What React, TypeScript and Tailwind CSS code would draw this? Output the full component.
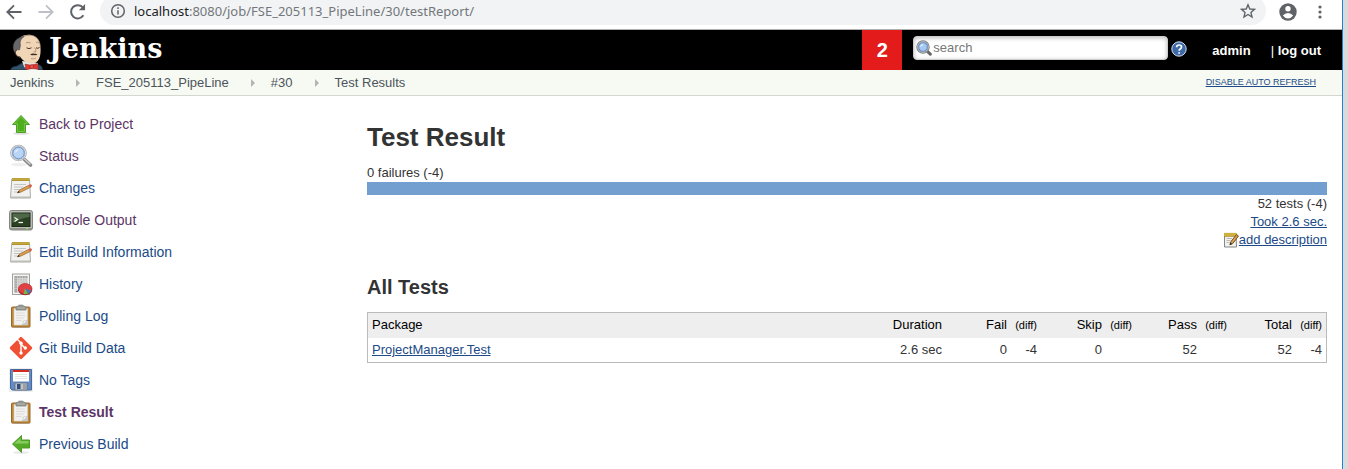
import React from "react";

type IconProps = { className?: string };

const Butler = () => (
  <svg className="h-10 w-9 shrink-0" viewBox="0 0 36 40" aria-hidden="true">
    <path d="M1.500 40 C2 37.500 4 36.500 8 36 L13 33 L28 34 C32 35 33.500 37 33.500 40Z" fill="#33536a" stroke="#1b2c38" strokeWidth="0.7" />
    <path d="M13 31 L15 36.500 L18 40 L29 40 L29 33Z" fill="#e9eaea" />
    <path d="M8 13 C9 8 14 4.500 20 4.800 C27 5 31.500 10 31.500 17 C31.800 22 31.500 26 30 29 C28.500 32.500 25 33.800 21.500 33.500 C17 33 13 30 11 26.500 C7.500 27 5.500 23 7.500 20.500Z" fill="#f0d6b7" />
    <path d="M12 8 C15 5.500 20 4.500 24 5.500 C29 7.500 31.500 12 31.500 18" fill="none" stroke="#6b5a49" strokeWidth="0.6" />
    <path d="M4.500 20 C3 13 7 7.500 15 6.500 C11.500 9 10.500 12 11.500 15.500 L10.500 20 L7.500 19.500 L6 23Z" fill="#66676a" stroke="#3a3a3c" strokeWidth="0.5" />
    <path d="M7.500 20 C5.500 21 6 25.500 9.500 26.500 L11 28" fill="none" stroke="#6b4f3c" strokeWidth="0.8" />
    <path d="M17 13 Q19 11.500 21.500 13 M27 12.500 Q28.500 11.500 30 13" stroke="#8b725c" strokeWidth="0.7" fill="none" />
    <path d="M17.500 17.800 Q20 19.500 22.500 17.800 M27 17.800 Q28.800 19 30.500 17.500" stroke="#4b382b" strokeWidth="1" fill="none" />
    <path d="M25.500 17.500 Q28 20.500 26.500 22 L24.500 21.800" stroke="#a9856a" strokeWidth="0.8" fill="none" />
    <path d="M21 24.800 Q23.500 22.800 25.500 23.800 Q27.500 23.300 28.500 24.500 Q26.500 25.500 25 24.900 Q23 25.600 21 24.800Z" fill="#3b2c25" />
    <path d="M22 28.500 Q25 29.500 27 28" stroke="#a57e66" strokeWidth="0.7" fill="none" />
    <path d="M16 34 L22 35.300 L28.500 33.500 L29.500 39.500 L23 38.300 L17 40Z" fill="#e23832" stroke="#8c1f1b" strokeWidth="0.5" />
    <rect x="21" y="34.800" width="3.500" height="3.800" rx="1" fill="#f0504a" stroke="#7c1816" strokeWidth="0.5" />
  </svg>
);

const UpArrow = () => (
  <svg className="size-6 shrink-0" viewBox="0 0 24 24" aria-hidden="true">
    <ellipse cx="12" cy="21.500" rx="8" ry="1.300" fill="#dedede" />
    <path d="M12 3.500 L20.500 12.500 H16.500 V20.500 H7.500 V12.500 H3.500Z" fill="#4fae1d" stroke="#4c9f27" />
    <path d="M12 4.500 L18.500 11.500 H15.500 V19.500 H8.500 V11.500 H5.500Z" fill="none" stroke="#7dca50" strokeWidth="0.8" />
  </svg>
);

const LeftArrow = () => (
  <svg className="size-6 shrink-0" viewBox="0 0 24 24" aria-hidden="true">
    <ellipse cx="12" cy="20.500" rx="8" ry="1.300" fill="#e9e9e9" />
    <path d="M3.500 12 L12.500 3.500 V8 H20.500 V16 H12.500 V20.500Z" fill="#55aa27" stroke="#4c9a27" />
    <path d="M5 11.800 L11.500 5.800 V9 H19.500 V11.500Z" fill="#86cb5d" />
  </svg>
);

const Magnifier = ({ className = "size-6" }: IconProps) => (
  <svg className={`${className} shrink-0`} viewBox="0 0 24 24" aria-hidden="true">
    <ellipse cx="10" cy="20.500" rx="8" ry="1.800" fill="#eeeeee" />
    <path d="M15.500 15.500 L21.500 21" stroke="#858585" strokeWidth="3.600" strokeLinecap="round" />
    <path d="M15.500 15 L21 20" stroke="#cccccc" strokeWidth="1.600" strokeLinecap="round" />
    <circle cx="9.500" cy="9" r="7.300" fill="#b5d0f3" stroke="#a3a5a7" strokeWidth="2" />
    <circle cx="9.500" cy="9" r="7.200" fill="none" stroke="#dddfe1" strokeWidth="1" />
    <circle cx="9.500" cy="9" r="5.700" fill="#bad4f5" stroke="#6d97d0" />
    <path d="M5.500 9 Q6 5.500 10 5 Q8 8 5.500 9Z" fill="#e3efff" />
  </svg>
);

const SearchGlass = () => (
  <svg className="size-4 shrink-0" viewBox="0 0 16 16" aria-hidden="true">
    <path d="M11 11 L14.300 14.200" stroke="#666" strokeWidth="3" strokeLinecap="round" />
    <circle cx="7" cy="7" r="5.800" fill="#a9c8ef" stroke="#7b7d80" strokeWidth="1.800" />
    <circle cx="7" cy="7" r="5.500" fill="none" stroke="#c9cbce" strokeWidth="0.700" />
    <circle cx="7" cy="7" r="4.300" fill="#a9c8ef" stroke="#4f80bf" strokeWidth="0.800" />
    <path d="M4 7 Q4.500 4 7.500 4 Q6.500 6.300 4 7Z" fill="#e3efff" />
  </svg>
);

const Notepad = () => (
  <svg className="size-6 shrink-0" viewBox="0 0 24 24" aria-hidden="true">
    <path d="M2.800 3 H20.500 L21.500 22 H1.500Z" fill="#f1f1ef" stroke="#aaaba7" />
    <path d="M1.500 20.500 H21.500 V22 H1Z" fill="#bdbdb9" />
    <path d="M3 3.500 H20.500" stroke="#a98c2f" strokeWidth="3" />
    <path d="M3.500 3.200 H20.500" stroke="#dfc653" strokeWidth="2" strokeDasharray="1 1" />
    <path d="M5 8.500 H17 M5 11 H14 M5 13.500 H11 M5 16 H9" stroke="#c5c6c3" />
    <path d="M8.500 16.800 L10.500 14 L20.500 9 L22 11 L12 16Z" fill="#e0a052" stroke="#8d602f" strokeWidth="0.700" />
    <path d="M19.500 9.300 L21.500 8.300 Q23.500 8.500 22.800 10.500 L21.200 11.300Z" fill="#dc5348" />
    <path d="M8 17 L9.800 15 L11 16.300Z" fill="#2f2926" />
  </svg>
);

const SmallNotepad = () => (
  <svg className="size-4 shrink-0" viewBox="0 0 16 16" aria-hidden="true">
    <path d="M1.500 2 H13 L13.500 15 H1.500Z" fill="#f2f2f0" stroke="#858682" />
    <path d="M1 2.800 H13.500" stroke="#a88621" strokeWidth="3.800" />
    <path d="M1.500 2.500 H13.500" stroke="#f3da5c" strokeWidth="3" strokeDasharray="1 1" />
    <path d="M3.500 6.500 H9 M3.500 8.500 H7.500 M3.500 10.500 H6.500" stroke="#b9bab7" />
    <path d="M7 12.500 L8 9.500 L13.500 2.500 L15.500 4 L9.800 11.500Z" fill="#d8a14b" stroke="#60421d" strokeWidth="0.900" />
    <path d="M6.500 13.200 L7.300 10.800 L9.200 12Z" fill="#2b241f" />
  </svg>
);

const Terminal = () => (
  <svg className="size-6 shrink-0" viewBox="0 0 24 24" aria-hidden="true">
    <rect x="0.500" y="2.500" width="23" height="19.500" rx="2" fill="#b9bbb6" stroke="#85887f" />
    <path d="M1 20 H23 V21 Q23 22 21 22 H3 Q1 22 1 21Z" fill="#8d9088" />
    <rect x="3" y="5" width="18" height="13.500" fill="#2a4023" stroke="#1d2819" />
    <path d="M3.500 5.500 H20.500 V9 Q12 10 3.500 15Z" fill="#4f6848" />
    <path d="M5.500 9.500 L8.500 11.500 L5.500 13.500" fill="none" stroke="#edf7e9" strokeWidth="1.400" />
    <path d="M9.500 14.500 H14" stroke="#edf7e9" strokeWidth="1.300" />
    <rect x="17" y="20" width="2" height="1" fill="#8af143" />
  </svg>
);

const History = () => (
  <svg className="size-6 shrink-0" viewBox="0 0 24 24" aria-hidden="true">
    <rect x="3.500" y="2" width="17" height="20.500" fill="#f5f5f4" stroke="#a0a29e" />
    <rect x="5.500" y="4" width="13" height="16.500" fill="#c4c5c3" />
    <path d="M5.500 4 H18.500 V6 H5.500Z M5.500 4 H8 V20.500 H5.500Z" fill="#a6a7a5" />
    <path d="M5.500 6.500 H18.500 M5.500 9 H18.500 M5.500 11.500 H18.500 M5.500 14 H18.500 M5.500 16.500 H18.500 M8.500 4 V20.500 M11 4 V20.500 M13.500 4 V20.500 M16 4 V20.500" stroke="#e0e0df" strokeWidth="0.500" />
    <ellipse cx="16.200" cy="18.300" rx="6.800" ry="5" fill="#972426" />
    <ellipse cx="16.200" cy="16.800" rx="6.800" ry="5.300" fill="#e34044" stroke="#b32a2d" strokeWidth="0.700" />
    <path d="M16 16.500 L22.500 18.500 Q21.500 21 18.500 21.800Z" fill="#4e77b8" />
    <path d="M16 16.500 L19 21.800 Q17 22.500 14.500 22Z" fill="#77b742" />
  </svg>
);

const Clipboard = () => (
  <svg className="size-6 shrink-0" viewBox="0 0 24 24" aria-hidden="true">
    <ellipse cx="12" cy="23" rx="10" ry="1" fill="#ccc" />
    <rect x="2.500" y="3" width="18.500" height="20" rx="1" fill="#c18a35" stroke="#96692a" />
    <path d="M5 4.500 H18.500 V21 H5Z" fill="#f1f1f0" stroke="#d5d5d3" strokeWidth="0.600" />
    <path d="M7 9 H15.500 M7 11.500 H16 M7 14 H14.500 M7 16.500 H12.500" stroke="#dbdbd9" />
    <path d="M18.500 16.500 V21 H13.500Z" fill="#c8c8c6" />
    <path d="M13.500 21 L14.500 17 L18.500 16.500Z" fill="#fff" stroke="#aaa" strokeWidth="0.500" />
    <path d="M7 6 V3.500 Q7 2.500 8.500 2.300 Q9 1 11.700 1 Q14.500 1 15 2.300 Q17 2.500 17 3.500 V6Z" fill="#969894" stroke="#80827d" strokeWidth="0.800" />
    <path d="M8 4 H16" stroke="#b5b7b3" />
  </svg>
);

const Git = () => (
  <svg className="size-6 shrink-0" viewBox="0 0 24 24" aria-hidden="true">
    <rect x="3.700" y="3.700" width="16.600" height="16.600" rx="1.300" transform="rotate(45 12 12)" fill="#f05033" />
    <path d="M8.300 3.300 L12 7 V18 M12 8 L16.200 12.200" fill="none" stroke="#fff" strokeWidth="1.400" />
    <circle cx="12" cy="7.300" r="1.700" fill="#fff" />
    <circle cx="12" cy="17" r="1.700" fill="#fff" />
    <circle cx="16.300" cy="12" r="1.700" fill="#fff" />
  </svg>
);

const Floppy = () => (
  <svg className="size-6 shrink-0" viewBox="0 0 24 24" aria-hidden="true">
    <rect width="24" height="24" fill="#efefef" />
    <path d="M1.500 1.500 H22.500 V22 H3 L1.500 20.500Z" fill="#648bc3" stroke="#48699b" />
    <rect x="4" y="2" width="16" height="11.500" fill="#fff" />
    <rect x="4" y="2" width="16" height="2" fill="#d7281f" />
    <path d="M6 6.500 H18 M6 8.500 H18 M6 10.500 H18" stroke="#e2e2e2" strokeWidth="0.900" />
    <rect x="6" y="15" width="12" height="7" fill="#c1c4c6" stroke="#5e7085" strokeWidth="0.800" />
    <rect x="8" y="16" width="3.500" height="5" fill="#314d7e" />
    <path d="M14 15.500 H17.500 V21.500 H14Z" fill="#9da1a4" />
  </svg>
);

const tasks = [
  { label: "Back to Project", icon: <UpArrow />, visited: true },
  { label: "Status", icon: <Magnifier />, visited: true },
  { label: "Changes", icon: <Notepad /> },
  { label: "Console Output", icon: <Terminal />, visited: true },
  { label: "Edit Build Information", icon: <Notepad /> },
  { label: "History", icon: <History /> },
  { label: "Polling Log", icon: <Clipboard /> },
  { label: "Git Build Data", icon: <Git /> },
  { label: "No Tags", icon: <Floppy /> },
  { label: "Test Result", icon: <Clipboard />, visited: true, current: true },
  { label: "Previous Build", icon: <LeftArrow /> },
];

const crumbs = ["Jenkins", "FSE_205113_PipeLine", "#30", "Test Results"];

const BrowserBar = () => (
  <div className="flex h-[30px] items-start overflow-hidden border-b border-[#b0b0b0] bg-white pr-[14px]">
    <div className="flex h-[23px] w-[100px] shrink-0 items-center gap-2 pl-1">
      <button aria-label="Back" className="flex size-6 items-center">
        <svg viewBox="0 0 24 24" className="size-5" fill="none" stroke="#5f6368" strokeWidth="2.200"><path d="M21 12 H4 M12 4 L4 12 L12 20" /></svg>
      </button>
      <button aria-label="Forward" className="flex size-6 items-center">
        <svg viewBox="0 0 24 24" className="size-5" fill="none" stroke="#bdc1c6" strokeWidth="2.200"><path d="M3 12 H20 M12 4 L20 12 L12 20" /></svg>
      </button>
      <button aria-label="Reload" className="flex size-6 items-center">
        <svg viewBox="0 0 24 24" className="size-5" fill="none" stroke="#5f6368" strokeWidth="2.400"><path d="M18.500 16 A8 8 0 1 1 18 6.800" /><path d="M20.500 2.500 V10 H13Z" fill="#5f6368" stroke="none" /></svg>
      </button>
    </div>
    <div className="-mt-1 flex h-[29px] grow items-center rounded-full bg-[#f1f3f4] px-[10px]">
      <svg viewBox="0 0 16 16" className="size-4 shrink-0" fill="none" stroke="#5f6368" strokeWidth="1.500" aria-hidden="true"><circle cx="8" cy="8" r="6.300" /><path d="M8 7.200 V11.500 M8 4.300 V5.900" /></svg>
      <span className="ml-2 grow font-['Noto_Sans','Open_Sans',sans-serif] text-[13px] leading-4 text-[#73777b]">
        <span className="text-[#202124]">localhost</span>:8080/job/FSE_205113_PipeLine/30/testReport/
      </span>
      <button aria-label="Bookmark this page">
        <svg viewBox="0 0 24 24" className="size-4" fill="none" stroke="#5f6368" strokeWidth="2" aria-hidden="true"><path d="M12 2.500 L14.700 9 L21.800 9.500 L16.400 14.100 L18.100 21 L12 17.300 L5.900 21 L7.600 14.100 L2.200 9.500 L9.300 9Z" /></svg>
      </button>
    </div>
    <div className="flex h-[23px] items-center gap-[14px] pl-3">
      <button aria-label="Profile">
        <svg viewBox="0 0 20 20" className="size-5" aria-hidden="true"><circle cx="10" cy="10" r="8.700" fill="#5f6368" /><circle cx="10" cy="6.800" r="2.700" fill="#fff" /><path d="M4.800 13.600 Q7 11 10 11 Q13 11 15.200 13.600 Q13 16.500 10 16.500 Q7 16.500 4.800 13.600Z" fill="#fff" /></svg>
      </button>
      <button aria-label="Menu">
        <svg viewBox="0 0 16 16" className="size-4" fill="#5f6368" aria-hidden="true"><circle cx="8" cy="3" r="1.600" /><circle cx="8" cy="8" r="1.600" /><circle cx="8" cy="13" r="1.600" /></svg>
      </button>
    </div>
  </div>
);

const Header = () => (
  <header className="flex h-10 bg-black pl-[9px] text-white">
    <a href="#home" className="flex items-start gap-1">
      <Butler />
      <span className="font-['DejaVu_Serif',serif] text-[27px] leading-[38px] font-bold">Jenkins</span>
    </a>
    <a href="#monitors" className="ml-auto flex w-10 items-center justify-center bg-[#e31b1b] text-xl font-bold">2</a>
    <form className="ml-[11px] flex items-start gap-[3px] pt-[6px]" onSubmit={(e) => e.preventDefault()}>
      <label className="flex h-6 w-[255px] items-center rounded-[4px] border border-[#ccc] bg-white pl-[2px] shadow-[inset_0_1px_4px_#bbbbbb]">
        <SearchGlass />
        <input
          aria-label="Search"
          placeholder="search"
          className="w-full min-w-0 bg-transparent pl-px text-[13px] text-[#333] outline-none placeholder:text-[#777]"
        />
      </label>
      <a href="#help" aria-label="Help" className="pt-[5px]">
        <svg viewBox="0 0 16 16" className="size-4" aria-hidden="true"><circle cx="8" cy="8" r="7.200" fill="#3f6aa8" stroke="#d5dfef" /><path d="M5.600 6.200 Q5.700 4 8.100 4 Q10.500 4 10.500 6 Q10.500 7.200 9.200 8 Q8.100 8.700 8.100 9.800 M8.100 11.200 V12.800" stroke="#fff" strokeWidth="1.700" fill="none" /></svg>
      </a>
    </form>
    <nav className="mr-[21px] ml-[25px] flex items-center gap-5 pt-px text-[13px] font-bold">
      <a href="#admin">admin</a>
      <span><span className="font-normal">|</span> <a href="#logout">log out</a></span>
    </nav>
  </header>
);

const Breadcrumbs = () => (
  <nav aria-label="Breadcrumbs" className="flex h-[26px] items-center border-b border-[#d3d7cf] bg-[#f6faf2] pr-[26px] pl-[10px] text-[13px] text-[#4d545d]">
    <ol className="flex items-center">
      {crumbs.map((crumb, i) => (
        <li key={crumb} className="flex items-center">
          {i > 0 && (
            <svg viewBox="0 0 5 8" className="mr-[15px] ml-[22px] h-2 w-[5px]" fill="#b4b4b4" aria-hidden="true"><path d="M0 0 L4 4 L0 8Z" /></svg>
          )}
          <a href={`#crumb-${i}`}>{crumb}</a>
        </li>
      ))}
    </ol>
    <a href="#refresh" className="ml-auto text-[9px] text-[#204a87] underline">DISABLE AUTO REFRESH</a>
  </nav>
);

const Sidebar = () => (
  <aside className="w-[367px] shrink-0 pt-4 pl-[9px]">
    <ul className="flex flex-col gap-2">
      {tasks.map((task, i) => (
        <li key={task.label}>
          <a
            href={`#task-${i}`}
            className={`flex h-6 items-center gap-[6px] text-sm ${task.visited ? "text-[#5c3566]" : "text-[#204a87]"} ${task.current ? "font-bold" : ""}`}
          >
            {task.icon}
            {task.label}
          </a>
        </li>
      ))}
    </ul>
  </aside>
);

const headings = [
  { label: "Fail", value: "0", diff: "-4" },
  { label: "Skip", value: "0", diff: "" },
  { label: "Pass", value: "52", diff: "" },
  { label: "Total", value: "52", diff: "-4" },
];

const Results = () => (
  <main className="min-w-0 grow pt-[26px] pr-[15px] text-[13px] leading-[18px] text-[#333]">
    <h1 className="text-[26px] leading-[30px] font-bold">Test Result</h1>
    <div className="mt-3">0 failures (-4)</div>
    <div className="h-[13px] bg-[#729fcf]" />
    <div className="flex flex-col items-end text-[#204a87]">
      <span className="text-[#333]">52 tests (-4)</span>
      <a href="#duration" className="underline">Took 2.6 sec.</a>
      <a href="#description" className="flex items-center underline"><SmallNotepad />add description</a>
    </div>
    <h2 className="mt-[26px] text-xl leading-6 font-bold">All Tests</h2>
    <table className="mt-[13px] w-full table-fixed border-separate border-spacing-0 border border-[#bbb]">
      <colgroup>
        <col />
        <col className="w-[65px]" />
        {headings.map((h) => (
          <React.Fragment key={h.label}>
            <col className="w-[65px]" />
            <col className="w-[30px]" />
          </React.Fragment>
        ))}
      </colgroup>
      <thead>
        <tr className="h-[25px] bg-[#eee] text-black">
          <th className="px-1 pb-[2px] text-left font-normal">Package</th>
          <th className="px-1 pb-[2px] text-right font-normal">Duration</th>
          {headings.map((h) => (
            <React.Fragment key={h.label}>
              <th className="px-1 pb-[2px] text-right font-normal">{h.label}</th>
              <th className="pr-1 pb-[2px] text-right text-[11px] font-normal">(diff)</th>
            </React.Fragment>
          ))}
        </tr>
      </thead>
      <tbody>
        <tr className="h-6">
          <td className="px-1"><a href="#package" className="text-[#204a87] underline">ProjectManager.Test</a></td>
          <td className="px-1 text-right">2.6 sec</td>
          {headings.map((h) => (
            <React.Fragment key={h.label}>
              <td className="px-1 text-right">{h.value}</td>
              <td className="px-1 text-right">{h.diff}</td>
            </React.Fragment>
          ))}
        </tr>
      </tbody>
    </table>
  </main>
);

export default function App() {
  return (
    <div className="flex min-h-screen bg-white font-['Liberation_Sans',Arial,sans-serif]">
      <div className="min-w-0 grow">
        <BrowserBar />
        <Header />
        <Breadcrumbs />
        <div className="flex">
          <Sidebar />
          <Results />
        </div>
      </div>
      <div className="w-[6px] shrink-0 border-l border-[#1883d7] bg-[#dadada]" />
    </div>
  );
}
